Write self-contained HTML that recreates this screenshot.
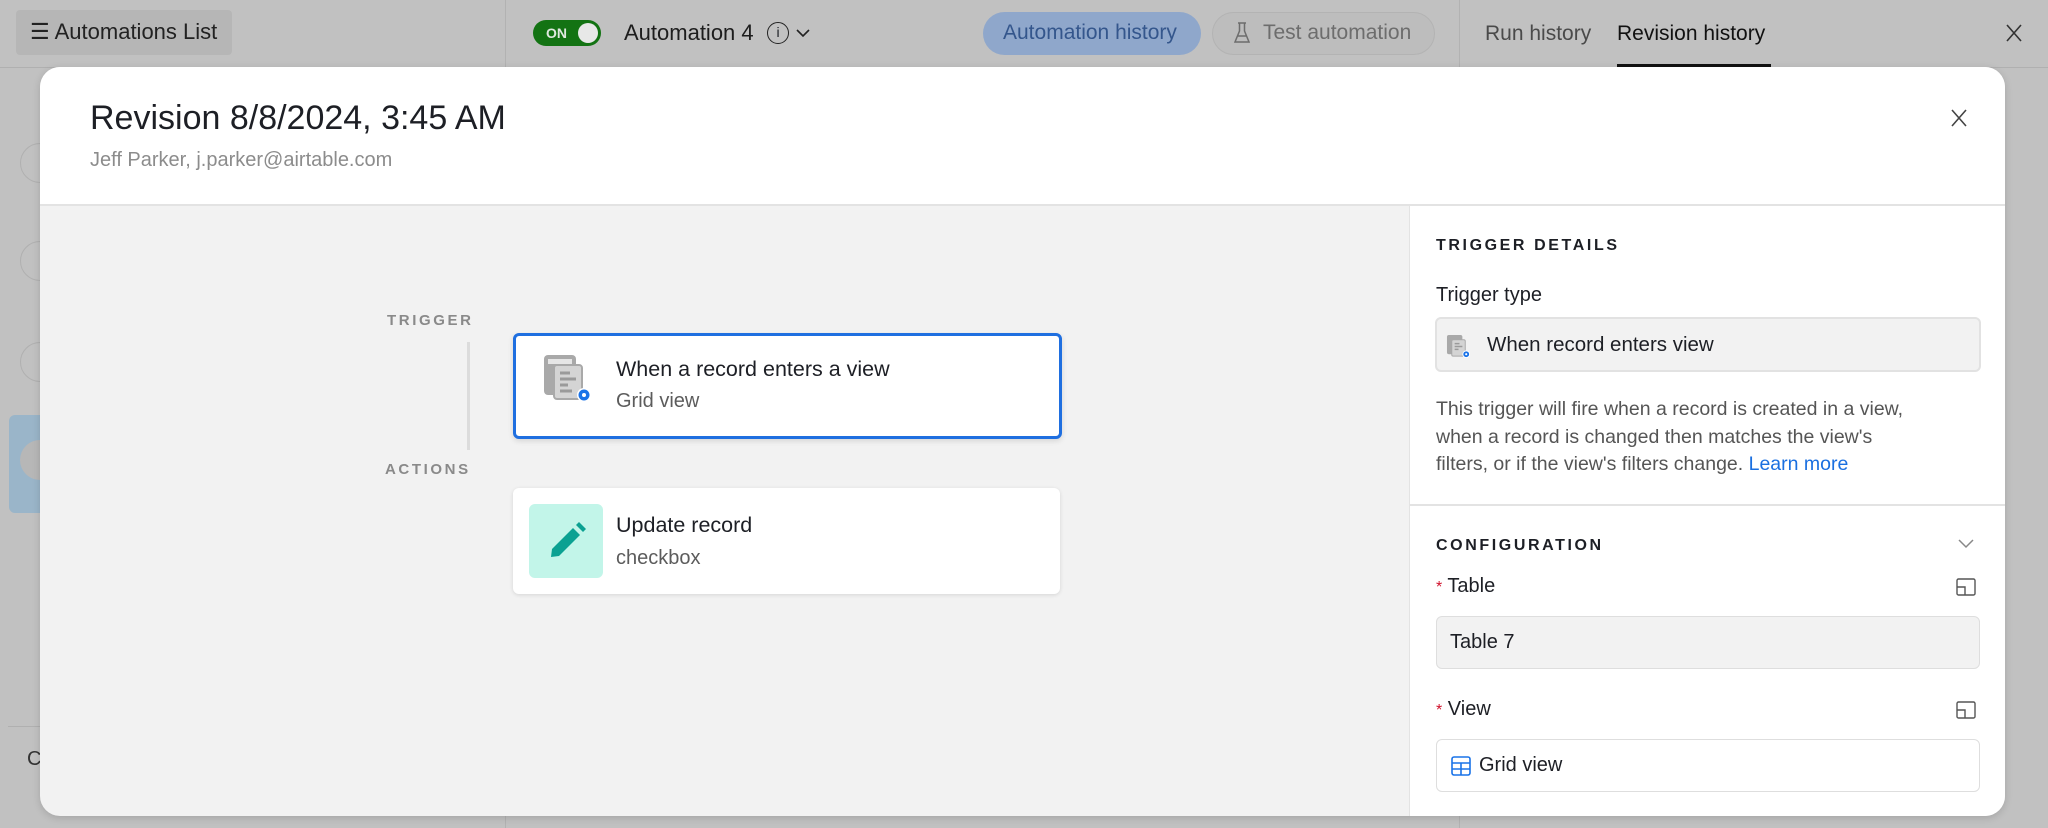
<!DOCTYPE html>
<html><head><meta charset="utf-8"><style>
*{box-sizing:border-box;margin:0;padding:0}
body{width:2048px;height:828px;overflow:hidden;background:#c1c1c1;font-family:"Liberation Sans",sans-serif;position:relative;color:#1d1f25}
.a{position:absolute}
.t{white-space:nowrap}
</style></head><body>
<div class="a" style="left:0;top:67px;width:2048px;height:1px;background:#b0b0b0"></div>
<div class="a" style="left:505px;top:0;width:1px;height:828px;background:#b2b2b2"></div>
<div class="a" style="left:1459px;top:0;width:1px;height:828px;background:#b2b2b2"></div>
<div class="a" style="left:16px;top:10px;width:216px;height:45px;background:#b6b6b6;border-radius:4px"></div>
<div class="a t" style="left:30px;top:19px;font-size:22px;color:#222">☰ Automations List</div>
<div class="a" style="left:533px;top:20px;width:68px;height:26px;background:#137313;border-radius:13px"></div>
<div class="a t" style="left:546px;top:25px;font-size:14px;font-weight:bold;color:#dfe9df">ON</div>
<div class="a" style="left:578px;top:23px;width:20px;height:20px;background:#e8e8e8;border-radius:50%"></div>
<div class="a t" style="left:624px;top:20px;font-size:22px;color:#1d1d1d">Automation 4</div>
<div class="a" style="left:767px;top:22px;width:22px;height:22px;border:1.6px solid #222;border-radius:50%;font-size:14px;text-align:center;line-height:19px">i</div>
<svg class="a" style="left:794px;top:26px" width="18" height="14"><path d="M3 4l6 6 6-6" fill="none" stroke="#222" stroke-width="1.6"/></svg>
<div class="a" style="left:983px;top:12px;width:218px;height:43px;background:#8fa7cb;border-radius:22px"></div>
<div class="a t" style="left:1003px;top:21px;font-size:21px;color:#34568c">Automation history</div>
<div class="a" style="left:1212px;top:12px;width:223px;height:43px;background:#bdbdbd;border:1.5px solid #b3b3b3;border-radius:22px"></div>
<svg class="a" style="left:1232px;top:21px" width="20" height="24"><path d="M6 2h8M7.5 2v8L3 21h14L12.5 10V2M5 15h10" fill="none" stroke="#6d6d6d" stroke-width="1.5"/></svg>
<div class="a t" style="left:1263px;top:21px;font-size:21px;color:#6d6d6d">Test automation</div>
<div class="a t" style="left:1485px;top:22px;font-size:21px;color:#4a4a4a">Run history</div>
<div class="a t" style="left:1617px;top:22px;font-size:21px;color:#111">Revision history</div>
<div class="a" style="left:1617px;top:64px;width:154px;height:3px;background:#111"></div>
<svg class="a" style="left:2004px;top:22px" width="20" height="22"><path d="M3 3l14 16M17 3L3 19" stroke="#333" stroke-width="1.6"/></svg>
<div class="a" style="left:9px;top:415px;width:45px;height:98px;background:#9ab5c9;border-radius:6px"></div>
<div class="a" style="left:20px;top:143px;width:40px;height:40px;border:1.5px solid #b0b0b0;border-radius:50%"></div>
<div class="a" style="left:20px;top:241px;width:40px;height:40px;border:1.5px solid #b0b0b0;border-radius:50%"></div>
<div class="a" style="left:20px;top:342px;width:40px;height:40px;border:1.5px solid #b0b0b0;border-radius:50%"></div>
<div class="a" style="left:20px;top:440px;width:40px;height:40px;background:#b7b7b7;border-radius:50%"></div>
<div class="a" style="left:8px;top:726px;width:497px;height:1px;background:#b0b0b0"></div>
<div class="a t" style="left:27px;top:748px;font-size:20px;color:#333">C</div>
<div class="a" style="left:40px;top:67px;width:1965px;height:749px;background:#f2f2f2;border-radius:20px;overflow:hidden;box-shadow:0 2px 8px rgba(0,0,0,.15)">
  <div class="a" style="left:0;top:0;width:1965px;height:139px;background:#fff;border-bottom:2px solid #e3e3e3"></div>
  <div class="a t" style="left:50px;top:32px;font-size:34px;color:#1d1f25">Revision 8/8/2024, 3:45 AM</div>
  <div class="a t" style="left:50px;top:82px;font-size:20px;color:#8c8c8c">Jeff Parker, j.parker@airtable.com</div>
  <svg class="a" style="left:1909px;top:40px" width="20" height="22"><path d="M3 3l14 16M17 3L3 19" stroke="#444" stroke-width="1.6"/></svg>
  <div class="a t" style="left:347px;top:245px;font-size:15px;font-weight:bold;letter-spacing:2.6px;color:#8a8a8a">TRIGGER</div>
  <div class="a" style="left:427px;top:275px;width:3px;height:108px;background:#dcdcdc"></div>
  <div class="a t" style="left:345px;top:394px;font-size:15px;font-weight:bold;letter-spacing:2.6px;color:#8a8a8a">ACTIONS</div>
  <div class="a" style="left:473px;top:266px;width:549px;height:106px;background:#fff;border:3px solid #1f6fe0;border-radius:6px;box-shadow:0 2px 6px rgba(0,0,0,.12)"></div>
  <svg class="a" style="left:502px;top:286px" width="54" height="54" viewBox="0 0 54 54">
    <rect x="2" y="2" width="32" height="40" rx="4" fill="#a9a9a9"/>
    <rect x="6" y="6" width="24" height="5" fill="#e6e6e6"/>
    <rect x="12" y="12" width="28" height="34" rx="3" fill="#d4d4d4" stroke="#a9a9a9" stroke-width="2"/>
    <path d="M18 20h10M18 26h16M18 32h8M18 38h12" stroke="#9a9a9a" stroke-width="3"/>
    <circle cx="42" cy="42" r="7" fill="#fff"/><circle cx="42" cy="42" r="5.5" fill="#1a73e8"/><circle cx="42" cy="42" r="2" fill="#fff"/>
  </svg>
  <div class="a t" style="left:576px;top:290px;font-size:21.5px;color:#1d1f25">When a record enters a view</div>
  <div class="a t" style="left:576px;top:323px;font-size:20px;color:#5c5c5c">Grid view</div>
  <div class="a" style="left:473px;top:421px;width:547px;height:106px;background:#fff;border-radius:6px;box-shadow:0 1px 4px rgba(0,0,0,.12)"></div>
  <div class="a" style="left:489px;top:437px;width:74px;height:74px;background:#c2f5e9;border-radius:6px"></div>
  <svg class="a" style="left:505px;top:452px" width="44" height="44" viewBox="0 0 44 44"><path d="M6 38l1-8L28 9l7 7-21 21z" fill="#0ba192"/><path d="M31 6l3-3 7 7-3 3z" fill="#0ba192"/></svg>
  <div class="a t" style="left:576px;top:446px;font-size:21.5px;color:#1d1f25">Update record</div>
  <div class="a t" style="left:576px;top:480px;font-size:20px;color:#5c5c5c">checkbox</div>
  <div class="a" style="left:1369px;top:139px;width:596px;height:610px;background:#fff;border-left:1.5px solid #e3e3e3">
    <div class="a t" style="left:26px;top:31px;font-size:16px;font-weight:bold;letter-spacing:2.6px;color:#1d1f25">TRIGGER DETAILS</div>
    <div class="a t" style="left:26px;top:78px;font-size:20px;color:#1d1f25">Trigger type</div>
    <div class="a" style="left:25px;top:111px;width:546px;height:55px;background:#f2f2f2;border:2px solid #e2e2e2;border-radius:6px"></div>
    <svg class="a" style="left:36px;top:128px" width="26" height="26" viewBox="0 0 54 54">
      <rect x="2" y="2" width="32" height="40" rx="4" fill="#a9a9a9"/>
      <rect x="12" y="12" width="28" height="34" rx="3" fill="#d4d4d4" stroke="#a9a9a9" stroke-width="2"/>
      <path d="M18 20h10M18 26h16M18 32h8" stroke="#9a9a9a" stroke-width="3"/>
      <circle cx="42" cy="42" r="8" fill="#fff"/><circle cx="42" cy="42" r="6" fill="#1a73e8"/><circle cx="42" cy="42" r="2.2" fill="#fff"/>
    </svg>
    <div class="a t" style="left:77px;top:127px;font-size:20.5px;color:#1d1f25">When record enters view</div>
    <div class="a" style="left:26px;top:190px;width:525px;font-size:19.5px;line-height:27.5px;color:#555">This trigger will fire when a record is created in a view,<br>when a record is changed then matches the view's<br>filters, or if the view's filters change. <span style="color:#1a6fe0">Learn more</span></div>
    <div class="a" style="left:0;top:298px;width:596px;height:1.5px;background:#e3e3e3"></div>
    <div class="a t" style="left:26px;top:331px;font-size:16px;font-weight:bold;letter-spacing:2.6px;color:#1d1f25">CONFIGURATION</div>
    <svg class="a" style="left:546px;top:331px" width="20" height="14"><path d="M3 3l7 7 7-7" fill="none" stroke="#888" stroke-width="1.5"/></svg>
    <div class="a t" style="left:26px;top:369px;font-size:20px;color:#1d1f25"><span style="color:#d0112b;font-size:16px">*</span> Table</div>
    <svg class="a" style="left:546px;top:372px" width="20" height="18"><rect x="1" y="1" width="18" height="16" rx="1.5" fill="none" stroke="#555" stroke-width="1.4"/><path d="M1 9h8v8" fill="none" stroke="#555" stroke-width="1.4"/></svg>
    <div class="a" style="left:26px;top:410px;width:544px;height:53px;background:#f2f2f2;border:1.5px solid #dedede;border-radius:6px"></div>
    <div class="a t" style="left:40px;top:425px;font-size:20px;color:#1d1f25">Table 7</div>
    <div class="a t" style="left:26px;top:492px;font-size:20px;color:#1d1f25"><span style="color:#d0112b;font-size:16px">*</span> View</div>
    <svg class="a" style="left:546px;top:495px" width="20" height="18"><rect x="1" y="1" width="18" height="16" rx="1.5" fill="none" stroke="#555" stroke-width="1.4"/><path d="M1 9h8v8" fill="none" stroke="#555" stroke-width="1.4"/></svg>
    <div class="a" style="left:26px;top:533px;width:544px;height:53px;background:#fff;border:1.5px solid #dedede;border-radius:6px"></div>
    <svg class="a" style="left:41px;top:550px" width="20" height="20"><rect x="1" y="1" width="18" height="18" rx="2" fill="none" stroke="#1a73e8" stroke-width="1.6"/><path d="M1 7h18M1 13h18M10 7v12" stroke="#1a73e8" stroke-width="1.6"/></svg>
    <div class="a t" style="left:69px;top:548px;font-size:20px;color:#1d1f25">Grid view</div>
  </div>
</div>
</body></html>
